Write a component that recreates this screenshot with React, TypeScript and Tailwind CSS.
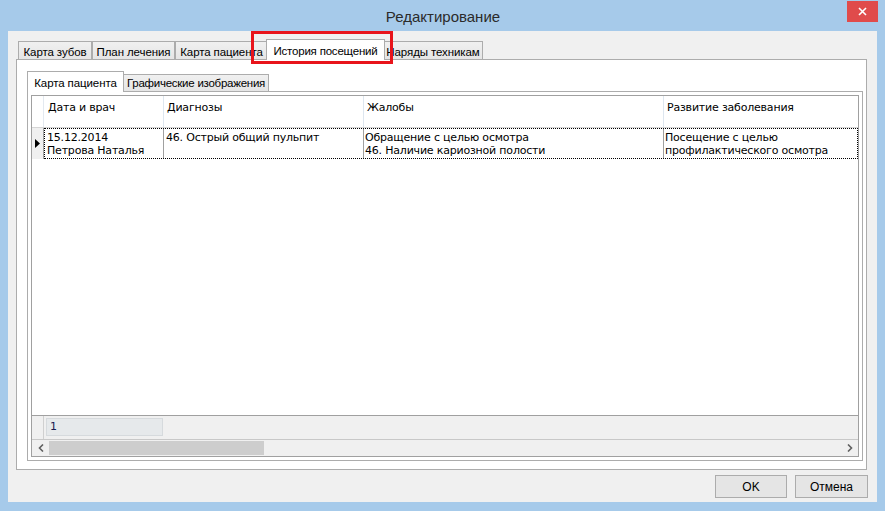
import React from 'react';

const ui = { fontFamily: '"Liberation Sans", Arial, sans-serif' };
const grid = { fontFamily: '"DejaVu Sans", "Liberation Sans", sans-serif' };

function Tab({ label, w, active }: { label: string; w: string; active?: boolean }) {
  if (active) {
    return (
      <div
        className={`${w} h-[21px] -mx-[2px] -mb-px relative z-10 bg-white border border-b-0 border-[#acacac] flex items-start justify-center pt-[3px] text-[11.5px] tracking-[-0.2px] text-black whitespace-nowrap`}
      >
        {label}
      </div>
    );
  }
  return (
    <div
      className={`${w} h-[18px] bg-gradient-to-b from-[#f0f0f0] to-[#e5e5e5] border border-b-0 border-[#acacac] flex items-start justify-center pt-[2px] text-[11.5px] tracking-[-0.1px] text-black whitespace-nowrap overflow-hidden`}
    >
      {label}
    </div>
  );
}

export default function App() {
  return (
    <div className="w-[885px] h-[511px] bg-[#a6caea] flex flex-col overflow-hidden" style={ui}>
      {/* title bar */}
      <div className="h-[31px] flex items-start shrink-0">
        <div className="w-[39px]" />
        <div className="flex-1 text-center text-[15px] leading-none pt-[9px] text-[#2b2b2b]">Редактирование</div>
        <div className="w-[31px] h-[21px] mt-px mr-[7px] bg-[#e04b4b] flex items-center justify-center">
          <svg width="9" height="9" viewBox="0 0 9 9">
            <path d="M1 1L8 8M8 1L1 8" stroke="white" strokeWidth="1.6" />
          </svg>
        </div>
      </div>

      {/* client */}
      <div className="mx-[8px] h-[471px] bg-[#f0f0f0] flex flex-col shrink-0">
        {/* outer tab control */}
        <div className="ml-[8px] mr-[10px] mt-[8px] flex flex-col">
          <div className="relative flex items-end h-[20px] pl-[2px]">
            <Tab label="Карта зубов" w="w-[74px]" />
            <Tab label="План лечения" w="w-[83px]" />
            <Tab label="Карта пациента" w="w-[93px]" />
            <Tab label="История посещений" w="w-[119px]" active />
            <Tab label="Наряды техникам" w="w-[100px]" />
            <div className="absolute left-[235px] -top-[8px] w-[142px] h-[33px] border-[3px] border-[#e8141b] z-20" />
          </div>
          <div className="h-[411px] bg-white border border-[#acacac] pl-[10px] pr-[3px] pt-[11px] pb-[8px] flex flex-col">
            {/* inner tab control */}
            <div className="flex items-end h-[20px]">
              <div className="w-[97px] h-[21px] -mb-px relative z-10 bg-white border border-b-0 border-[#acacac] pt-[3px] text-center text-[11.5px] tracking-[-0.1px] whitespace-nowrap">
                Карта пациента
              </div>
              <div className="w-[145px] h-[17px] bg-gradient-to-b from-[#f0f0f0] to-[#e5e5e5] border border-b-0 border-l-0 border-[#acacac] text-center text-[11.5px] tracking-[-0.25px] leading-[17px] whitespace-nowrap">
                Графические изображения
              </div>
            </div>
            <div className="flex-1 border border-[#acacac] p-[3px] flex">
              {/* data grid */}
              <div className="flex-1 border border-[#a0a0a0] bg-white flex flex-col text-[11px] tracking-[-0.2px] text-black" style={grid}>
                <div className="h-[32px] flex border-b border-[#d5d5d5] shrink-0">
                  <div className="w-[12px] border-r border-[#e3e9f0]" />
                  <div className="w-[120px] border-r border-[#dde6ef] pl-[4px] pt-[4px]">Дата и врач</div>
                  <div className="w-[200px] border-r border-[#dde6ef] pl-[3px] pt-[4px]">Диагнозы</div>
                  <div className="w-[300px] border-r border-[#dde6ef] pl-[3px] pt-[4px]">Жалобы</div>
                  <div className="flex-1 pl-[3px] pt-[4px]">Развитие заболевания</div>
                </div>
                <div className="h-[31px] flex shrink-0">
                  <div className="w-[12px] bg-[#f0f0f0] border-r border-[#a0a0a0] flex items-center justify-center">
                    <svg width="5" height="9" viewBox="0 0 5 9">
                      <path d="M0 0L5 4.5L0 9Z" fill="black" />
                    </svg>
                  </div>
                  <div className="flex-1 flex border border-dotted border-black leading-[13px]">
                    <div className="w-[119px] border-r border-[#a0a0a0] pl-[2px] pt-[2px]">
                      15.12.2014
                      <br />
                      Петрова Наталья
                    </div>
                    <div className="w-[200px] border-r border-[#a0a0a0] pl-[2px] pt-[2px]">46. Острый общий пульпит</div>
                    <div className="w-[300px] border-r border-[#a0a0a0] pl-[1px] pt-[2px]">
                      Обращение с целью осмотра
                      <br />
                      46. Наличие кариозной полости
                    </div>
                    <div className="flex-1 pl-[1px] pt-[2px]">
                      Посещение с целью
                      <br />
                      профилактического осмотра
                    </div>
                  </div>
                </div>
                <div className="flex-1" />
                <div className="h-[24px] flex bg-[#f0f0f0] border-t border-[#a0a0a0] shrink-0">
                  <div className="w-[12px] border-r border-[#d0d0d0]" />
                  <div className="w-[117px] h-[18px] mt-[2px] ml-[2px] bg-[#e6e9eb] border border-[#d6dadd] pl-[3px] leading-[16px] text-[#1a1a50]">
                    1
                  </div>
                </div>
                <div className="h-[17px] flex items-stretch bg-[#f0f0f0] border-t border-[#c8c8c8] shrink-0">
                  <div className="w-[17px] flex items-center justify-center">
                    <svg width="6" height="8" viewBox="0 0 6 8">
                      <path d="M5 0.5L1.5 4L5 7.5" stroke="#606060" strokeWidth="1.6" fill="none" />
                    </svg>
                  </div>
                  <div className="w-[215px] my-[1px] bg-[#cdcdcd]" />
                  <div className="flex-1" />
                  <div className="w-[17px] flex items-center justify-center">
                    <svg width="6" height="8" viewBox="0 0 6 8">
                      <path d="M1 0.5L4.5 4L1 7.5" stroke="#606060" strokeWidth="1.6" fill="none" />
                    </svg>
                  </div>
                </div>
              </div>
            </div>
          </div>
        </div>

        {/* buttons */}
        <div className="flex justify-end gap-[8px] mt-[5px] mr-[9px]">
          <div className="w-[72px] h-[23px] bg-[#e5e5e5] border border-[#acacac] flex items-center justify-center text-[12px] text-black">
            OK
          </div>
          <div className="w-[73px] h-[23px] bg-[#e5e5e5] border border-[#acacac] flex items-center justify-center text-[12px] text-black">
            Отмена
          </div>
        </div>
      </div>
    </div>
  );
}
